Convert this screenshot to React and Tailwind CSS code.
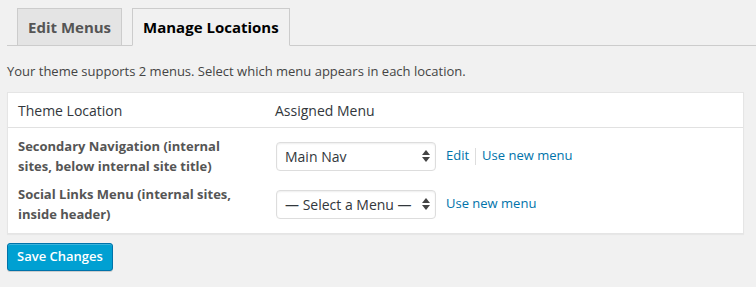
import React from "react";

// Up/down arrows drawn at the right edge of the selects
const SelectArrows = () => (
  <svg className="pointer-events-none absolute right-[6px] top-1/2 -translate-y-1/2" width="8" height="12" viewBox="0 0 8 12">
    <path d="M4 0 L8 5 L0 5 Z" fill="#444" />
    <path d="M0 7 L8 7 L4 12 Z" fill="#444" />
  </svg>
);

const MenuSelect = ({ value, options }) => (
  <div className="relative w-[160px]">
    <select
      defaultValue={value}
      className="block h-[29px] w-full appearance-none rounded-[4px] border border-[#ddd] bg-white pl-[8px] pr-[20px] text-[14px] text-[#32373c] shadow-[inset_0_1px_2px_rgba(0,0,0,0.07)] outline-none"
    >
      {options.map((option) => (
        <option key={option} value={option}>
          {option}
        </option>
      ))}
    </select>
    <SelectArrows />
  </div>
);

const LocationRow = ({ title, value, options, showEdit }) => (
  <div className="flex items-center py-[4px]">
    <div className="w-[268px] shrink-0 pl-[10px] pr-[27px] text-[13px] font-bold leading-[20px] text-[#555]">
      {title}
    </div>
    <div className="flex items-center">
      <MenuSelect value={value} options={options} />
      <div className="ml-[10px] flex items-center text-[13px] text-[#0073aa]">
        {showEdit && (
          <>
            <a href="#" className="pr-[6px]">Edit</a>
            <span className="h-[17px] w-px bg-[#ddd]" />
            <a href="#" className="pl-[6px]">Use new menu</a>
          </>
        )}
        {!showEdit && <a href="#">Use new menu</a>}
      </div>
    </div>
  </div>
);

export default function App() {
  return (
    <div className="min-h-[287px] bg-[#f1f1f1] font-['Open_Sans',sans-serif] text-[#444]">
      {/* Tabs */}
      <div className="ml-[7px] flex items-end border-b border-[#ccc] pt-[8px] pl-[10px]">
        <a href="#" className="-mb-px flex h-[38px] items-center border border-[#ccc] bg-[#e4e4e4] px-[10px] text-[15px] font-bold text-[#555]">
          Edit Menus
        </a>
        <a href="#" className="-mb-px ml-[10px] flex h-[38px] items-center border border-[#ccc] border-b-[#f1f1f1] bg-[#f1f1f1] px-[10px] text-[15px] font-bold text-black">
          Manage Locations
        </a>
      </div>

      <p className="px-[7px] pt-[15px] text-[13px] leading-[20px]">
        Your theme supports 2 menus. Select which menu appears in each location.
      </p>

      {/* Locations table */}
      <div className="ml-[7px] mt-[11px] w-[737px] border border-[#e5e5e5] bg-white shadow-[0_1px_1px_rgba(0,0,0,0.04)]">
        <div className="flex h-[35px] items-center border-b border-[#e1e1e1] text-[14px] text-[#32373c]">
          <div className="w-[267px] pl-[10px]">Theme Location</div>
          <div>Assigned Menu</div>
        </div>
        <div className="pt-[4px] pb-[5px]">
          <LocationRow
            title="Secondary Navigation (internal sites, below internal site title)"
            value="Main Nav"
            options={["— Select a Menu —", "Main Nav"]}
            showEdit
          />
          <LocationRow
            title="Social Links Menu (internal sites, inside header)"
            value="— Select a Menu —"
            options={["— Select a Menu —", "Main Nav"]}
          />
        </div>
      </div>

      <div className="px-[7px] pt-[9px]">
        <button
          type="button"
          className="h-[28px] rounded-[3px] border border-[#0073aa] bg-[#00a0d2] px-[9px] text-[13px] font-semibold text-white shadow-[inset_0_1px_0_rgba(120,200,230,0.5),0_1px_0_rgba(0,0,0,0.15)]"
        >
          Save Changes
        </button>
      </div>
    </div>
  );
}
